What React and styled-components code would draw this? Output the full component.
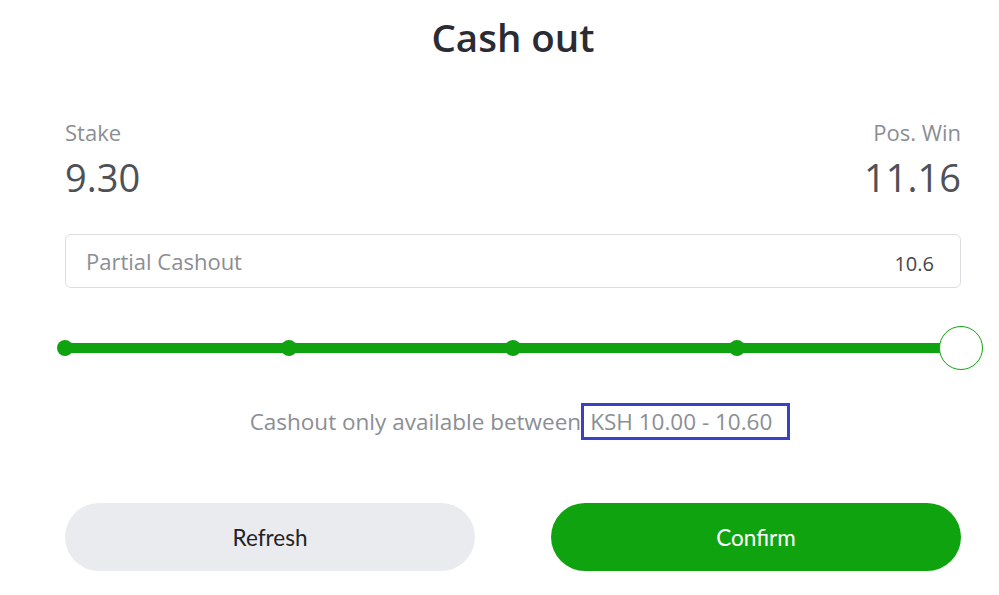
import styled, { createGlobalStyle } from "styled-components"

const GlobalStyle = createGlobalStyle`
    html, body {
        margin: 0;
        padding: 0;
        background: #ffffff;
    }
    body {
        font-family: 'Open Sans', 'Noto Sans', sans-serif;
    }
`

const colors = {
    green: '#10a310',
    text: '#2b2b33',
    value: '#4f5157',
    muted: '#8b8e94',
    border: '#dcdde1',
    light: '#e9ebee',
    highlight: '#3a42c4',
}

const StyledPage = styled.div`
    width: 999px;
    height: 595px;
    box-sizing: border-box;
    padding: 0 38px 0 65px;
    display: flex;
    flex-direction: column;
`

const StyledTitle = styled.h1`
    margin: 13px 0 0 0;
    text-align: center;
    font-size: 38.5px;
    line-height: 48px;
    font-weight: 600;
    color: ${colors.text};
`

const StyledAmounts = styled.div`
    display: flex;
    justify-content: space-between;
    margin-top: 58px;
`

const StyledAmount = styled.div`
    display: flex;
    flex-direction: column;
    align-items: ${props => (props.$right ? 'flex-end' : 'flex-start')};
`

const StyledLabel = styled.span`
    font-size: 22px;
    line-height: 26px;
    color: ${colors.muted};
`

const StyledValue = styled.span`
    font-size: 38px;
    line-height: 50px;
    color: ${colors.value};
    margin-top: 7px;
`

const StyledInput = styled.div`
    margin-top: 32px;
    height: 54px;
    box-sizing: border-box;
    border: 1.5px solid ${colors.border};
    border-radius: 6px;
    display: flex;
    align-items: center;
    justify-content: space-between;
    padding: 0 26px 0 20px;
`

const StyledPlaceholder = styled.span`
    font-size: 22px;
    color: ${colors.muted};
`

const StyledInputValue = styled.span`
    font-size: 20px;
    color: #45474c;
    margin-top: 4px;
`

const StyledSlider = styled.div`
    position: relative;
    margin-top: 38px;
    height: 44px;
    display: flex;
    align-items: center;
`

const StyledTrack = styled.div`
    flex: 1;
    height: 10px;
    border-radius: 5px;
    background: ${colors.green};
    display: flex;
    align-items: center;
    justify-content: space-between;
`

const StyledStep = styled.span`
    width: 16px;
    height: 16px;
    margin: 0 -8px;
    border-radius: 50%;
    background: ${colors.green};
    visibility: ${props => (props.$hidden ? 'hidden' : 'visible')};
`

const StyledThumb = styled.span`
    position: absolute;
    right: -22px;
    top: 0;
    width: 44px;
    height: 44px;
    box-sizing: border-box;
    border-radius: 50%;
    background: #ffffff;
    border: 1.5px solid ${colors.green};
`

const StyledHint = styled.p`
    margin: 33px 0 0 0;
    padding-left: 14px;
    text-align: center;
    font-size: 22.5px;
    line-height: 37px;
    color: ${colors.muted};
`

const StyledRange = styled.span`
    display: inline-block;
    border: 3px solid ${colors.highlight};
    padding: 0 15px 0 6px;
    line-height: 31px;
`

const StyledButtons = styled.div`
    display: flex;
    justify-content: space-between;
    margin-top: 63px;
`

const StyledButton = styled.button`
    width: 410px;
    height: 68px;
    border: none;
    border-radius: 34px;
    font-family: 'Lato', sans-serif;
    font-size: 22.5px;
    background: ${props => (props.$primary ? colors.green : colors.light)};
    color: ${props => (props.$primary ? '#ffffff' : '#222226')};
    cursor: pointer;
`

export default function App() {
    const steps = [0, 1, 2, 3, 4]

    return (
        <>
            <GlobalStyle />
            <StyledPage>
                <StyledTitle>Cash out</StyledTitle>
                <StyledAmounts>
                    <StyledAmount>
                        <StyledLabel>Stake</StyledLabel>
                        <StyledValue>9.30</StyledValue>
                    </StyledAmount>
                    <StyledAmount $right>
                        <StyledLabel>Pos. Win</StyledLabel>
                        <StyledValue>11.16</StyledValue>
                    </StyledAmount>
                </StyledAmounts>
                <StyledInput>
                    <StyledPlaceholder>Partial Cashout</StyledPlaceholder>
                    <StyledInputValue>10.6</StyledInputValue>
                </StyledInput>
                <StyledSlider>
                    <StyledTrack>
                        {steps.map((s) => (
                            <StyledStep key={s} $hidden={s === 4} />
                        ))}
                    </StyledTrack>
                    <StyledThumb />
                </StyledSlider>
                <StyledHint>
                    Cashout only available between<StyledRange>KSH 10.00 - 10.60</StyledRange>
                </StyledHint>
                <StyledButtons>
                    <StyledButton>Refresh</StyledButton>
                    <StyledButton $primary>Confirm</StyledButton>
                </StyledButtons>
            </StyledPage>
        </>
    )
}
